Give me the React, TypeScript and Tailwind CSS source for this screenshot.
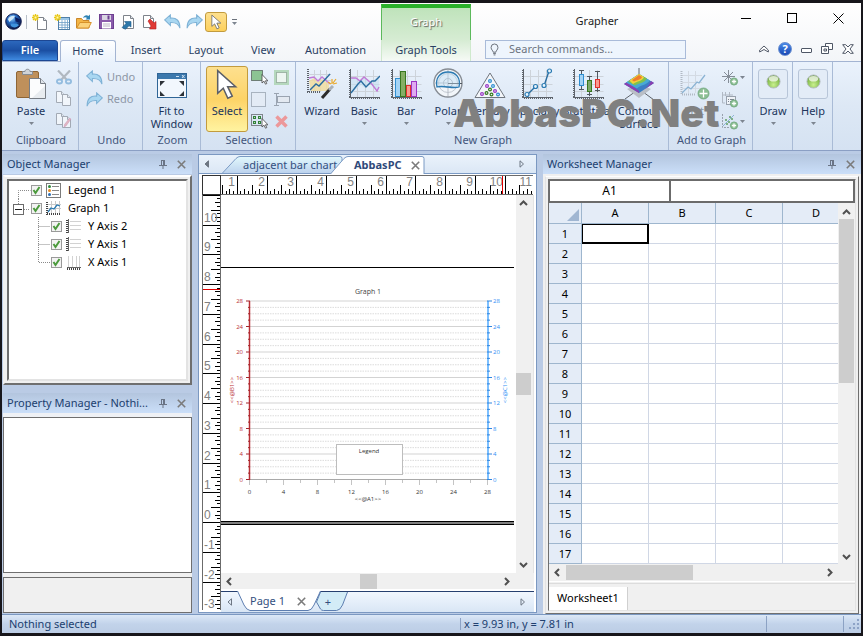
import { useState } from "react";
import type { ReactNode } from "react";

const TABS = [
  { label: "Insert", width: "w-[60px]" },
  { label: "Layout", width: "w-[60px]" },
  { label: "View", width: "w-[54px]" },
  { label: "Automation", width: "w-[91px]" },
];

const TREE = [
  { label: "Legend 1", kind: "legend", depth: 0 },
  { label: "Graph 1", kind: "graph", depth: 0 },
  { label: "Y Axis 2", kind: "y", depth: 1 },
  { label: "Y Axis 1", kind: "y", depth: 1 },
  { label: "X Axis 1", kind: "x", depth: 1 },
];

const COLUMNS = ["A", "B", "C", "D"];
const ROWS = Array.from({ length: 17 }, (_, i) => i + 1);

/* ---------- Small glyphs ---------- */

function Caret({ className = "" }: { className?: string }) {
  return (
    <svg width="5" height="3" viewBox="0 0 5 3" className={className}>
      <path d="M0 0h5L2.5 3z" fill="#7d8590" />
    </svg>
  );
}

function Chevron({ dir }: { dir: "up" | "down" | "left" | "right" }) {
  const d = {
    up: "M1 6l3.5-3.5L8 6",
    down: "M1 3l3.5 3.5L8 3",
    left: "M6 1L2.500 4.5 6 8",
    right: "M3 1l3.5 3.5L3 8",
  }[dir];
  return (
    <svg width="9" height="9" viewBox="0 0 9 9" fill="none" stroke="#505050" strokeWidth="2">
      <path d={d} />
    </svg>
  );
}

function Triangle({ dir, filled = false }: { dir: "left" | "right"; filled?: boolean }) {
  return (
    <svg width="6" height="8" viewBox="0 0 6 8" fill={filled ? "#6d7683" : "none"} stroke="#6d7683">
      <path d={dir === "left" ? "M4.5 .8v6.400L1 4z" : "M1 .8v6.400L4.5 4z"} />
    </svg>
  );
}

function Cross() {
  return (
    <svg width="9" height="9" viewBox="0 0 9 9" stroke="#7b7b7b" strokeWidth="1.6">
      <path d="M.8 .8l7.400 7.400M8.200 .8L.8 8.200" />
    </svg>
  );
}

function Pin() {
  return (
    <svg width="8" height="9" viewBox="0 0 8 9" fill="none" stroke="#6a7485">
      <path d="M2 .5h4M2.500 .5v5M5.500 .5v5M4.500 .5v5M0 5.500h8M4 6v3" />
    </svg>
  );
}

function Page({ x = 0, y = 0, w = 10, h = 13 }: { x?: number; y?: number; w?: number; h?: number }) {
  return (
    <g>
      <path
        d={`M${x + 0.5} ${y + 0.5}h${w - 4}l3 3v${h - 4}h-${w - 1}z`}
        fill="#fff"
        stroke="#7d828a"
      />
      <path d={`M${x + w - 3.5} ${y + 0.5}v3h3`} fill="#e4e8ee" stroke="#7d828a" />
    </g>
  );
}

function Star() {
  return (
    <g stroke="#e9c713" strokeWidth="1.4">
      <path d="M3.500 0v7M0 3.500h7M1 1l5 5M6 1L1 6" />
      <rect x="2.500" y="2.500" width="2" height="2" fill="#fff9b0" stroke="none" />
    </g>
  );
}

function Arrow({ redo = false }: { redo?: boolean }) {
  return (
    <svg width="17" height="15" viewBox="0 0 16 14" className={redo ? "-scale-x-100" : ""}>
      <path
        d="M.7 5.500L6 .8v3c5.500-.6 9 2.200 9 9.500-1.200-4-3.600-5.600-9-5.300v2.800z"
        fill="#a9d7f1"
        stroke="#7fb2d6"
      />
    </svg>
  );
}

function Pointer({ w = 13, h = 18 }: { w?: number; h?: number }) {
  return (
    <svg width={w} height={h} viewBox="0 0 13 18">
      <path
        d="M1 .8v13.400l3.300-3 2.700 5.900 2.600-1.200-2.700-5.600h4.700z"
        fill="#fff"
        stroke="#5b5f68"
        strokeWidth=".9"
      />
    </svg>
  );
}

/* ---------- Quick access icons ---------- */

function Globe() {
  return (
    <svg width="17" height="17" viewBox="0 0 17 17">
      <defs>
        <radialGradient id="globe" cx=".4" cy=".3" r=".7">
          <stop offset="0" stopColor="#8cc8f2" />
          <stop offset=".45" stopColor="#2468c0" />
          <stop offset="1" stopColor="#06103c" />
        </radialGradient>
      </defs>
      <circle cx="8.500" cy="8.500" r="7.800" fill="url(#globe)" stroke="#151d4e" />
      <path d="M3 6.500c1-3 4-4.200 7-3.600l-1.500 2.600L6 7.500 4.500 9z" fill="#cfe8fa" />
      <path d="M5.500 10.500h6l2.500 1.500c-2 3-6 3-8 1z" fill="#3f92dd" />
      <path d="M10 4l5 2.500-.5 3-4-1z" fill="#0c1d5e" />
    </svg>
  );
}

function NewDoc() {
  return (
    <svg width="16" height="16" viewBox="0 0 16 16">
      <Page x={5} y={3} />
      <Star />
    </svg>
  );
}

function NewSheet() {
  return (
    <svg width="16" height="16" viewBox="0 0 16 16">
      <rect x="4.500" y="3.500" width="11" height="12" fill="#fff" stroke="#4f7fa9" />
      <path d="M5 4h10v2H5z" fill="#9cc7e8" />
      <path d="M5 8.500h10M5 11h10M5 13.500h10M8 6v9M11 6v9M13.500 6v9" stroke="#6fa0c8" strokeWidth=".8" />
      <Star />
    </svg>
  );
}

function OpenFolder() {
  return (
    <svg width="16" height="15" viewBox="0 0 16 15">
      <path d="M.5 14V4.500h5l1.500 2h6V14z" fill="#f4b545" stroke="#c9862a" />
      <path d="M.8 14l3-5.500h11.500L12.500 14z" fill="#fbd27a" stroke="#d8922b" />
      <path d="M7 4c1-3 4-3.500 5.500-2l1.500-1.500v5H9.500L11 4c-1-1-2.500-1-4 0z" fill="#2e83b5" />
    </svg>
  );
}

function Save() {
  return (
    <svg width="15" height="15" viewBox="0 0 15 15">
      <rect x=".5" y=".5" width="14" height="14" fill="#8a5bab" stroke="#6d3f90" />
      <rect x="3" y="1" width="9" height="5" fill="#d9d4e2" />
      <rect x="8.500" y="1.500" width="2" height="4" fill="#6d3f90" />
      <rect x="3" y="8" width="9" height="6.500" fill="#fff" />
      <path d="M4 10h7M4 12h7" stroke="#b9b2c4" />
    </svg>
  );
}

function Transfer({ out = false }: { out?: boolean }) {
  return (
    <svg width="15" height="16" viewBox="0 0 15 16">
      {out ? <Page x={0} y={1} w={11} h={13} /> : <Page x={2} y={1} w={11} h={14} />}
      {out ? (
        <path d="M5 7l2-2 4 4 2-1.500V15H6.500L8 12z" fill="#e03a35" stroke="#b51f1f" strokeWidth=".6" />
      ) : (
        <path d="M1 13.500l4-4L3.500 7.500H10V13l-2-1.200-3.500 3.500z" fill="#2e78aa" stroke="#1f5d8a" strokeWidth=".6" />
      )}
    </svg>
  );
}

/* ---------- Ribbon icons ---------- */

function PasteIcon() {
  return (
    <svg width="32" height="32" viewBox="0 0 32 32">
      <rect x="1.500" y="3.500" width="22" height="26" rx="1.500" fill="#bf905b" stroke="#8e6535" />
      <path d="M7.500 6.500V3.500h2.500c0-3 5-3 5 0h2.500v3z" fill="#cfd3d8" stroke="#868c94" />
      <path d="M14.500 10.500h11l5 5v15h-16z" fill="#fbfcfd" stroke="#777d85" />
      <path d="M17 30l13-12v12z" fill="#e8ecf0" />
      <path d="M25.500 10.500v5h5" fill="#dfe4ea" stroke="#777d85" />
    </svg>
  );
}

function CutIcon() {
  return (
    <svg width="16" height="15" viewBox="0 0 16 15" fill="none">
      <path d="M2 .5l9 9.500M14 .5L5 10" stroke="#b0b8c0" strokeWidth="2.200" />
      <ellipse cx="3.500" cy="11.500" rx="2.600" ry="2" stroke="#93bcdf" strokeWidth="1.800" />
      <ellipse cx="12.500" cy="11.500" rx="2.600" ry="2" stroke="#93bcdf" strokeWidth="1.800" />
    </svg>
  );
}

function CopyIcon({ brush = false }: { brush?: boolean }) {
  return (
    <svg width="16" height="16" viewBox="0 0 16 16" opacity=".6">
      <Page x={0} y={0} w={9} h={12} />
      <Page x={6} y={3} w={9} h={12} />
      {brush && <path d="M15 6l-5 7-2 1 .5-2.500 5-6.500z" fill="#e79aa0" stroke="#b48" strokeWidth=".4" />}
    </svg>
  );
}

function FitIcon() {
  return (
    <svg width="32" height="32" viewBox="0 0 32 32">
      <rect x="1.500" y="5.500" width="29" height="24" fill="#f2f7fd" stroke="#2f6596" />
      <path d="M2 6h28v5H2z" fill="#3b78ad" />
      <path d="M20 8.500h3M26 7l2.500 3M28.500 7L26 10" stroke="#cfe1f1" />
      <path d="M4 13h5l-5 5zM28 13h-5l5 5zM4 28h5l-5-5zM28 28h-5l5-5z" fill="#2d3238" />
    </svg>
  );
}

function SelectSmall({ kind }: { kind: "fill" | "all" | "group" | "inner" | "text" | "delete" }) {
  const cursor = (
    <path d="M11 4.500v8.500l2-1.800 1.500 3 1.300-.7-1.400-2.700H17z" fill="#fff" stroke="#444" strokeWidth=".8" />
  );
  return (
    <svg width="17" height="15" viewBox="0 0 17 15" fill="none">
      {kind === "fill" && (
        <>
          <rect x=".5" y=".5" width="11" height="10" fill="#8cc493" stroke="#222" strokeDasharray="1 1" />
          {cursor}
        </>
      )}
      {kind === "all" && (
        <rect x=".5" y=".5" width="14" height="14" fill="#e3ebf5" stroke="#6f7a88" strokeDasharray="1 1" />
      )}
      {kind === "group" && (
        <>
          <rect x=".5" y=".5" width="11" height="11" stroke="#222" strokeDasharray="1 1" />
          <g stroke="#33803a" fill="#b9e0b4">
            <rect x="2.500" y="2.500" width="2" height="2" />
            <rect x="7.500" y="2.500" width="2" height="2" />
            <rect x="2.500" y="7.500" width="2" height="2" />
            <rect x="7.500" y="7.500" width="2" height="2" />
          </g>
          {cursor}
        </>
      )}
      {kind === "inner" && (
        <>
          <rect x="1" width="15" height="15" fill="#b5d8bd" />
          <rect x="3.500" y="2.500" width="10" height="10" fill="#edf6f1" stroke="#6f8576" strokeDasharray="1 1" />
        </>
      )}
      {kind === "text" && (
        <g stroke="#9aa4b1">
          <rect x="4.500" y="4.500" width="12" height="6" fill="#e3e9f1" />
          <path d="M1 1.500h5M3.500 1.500v12M1 13.500h5" />
        </g>
      )}
      {kind === "delete" && <path d="M3.500 2.500l10 10M13.500 2.500l-10 10" stroke="#ec989a" strokeWidth="3.500" />}
    </svg>
  );
}

function Axes() {
  return (
    <g fill="none">
      <path d="M2.500 8.500h29M2.500 16.500h29M2.500 23.500h29M9.500 2v28M17.500 2v28M25.500 2v28" stroke="#cdd3da" />
      <path d="M2.500 1v29M1 29.500h31" stroke="#5d636b" />
      <path d="M1.500 2v28" stroke="#5d636b" strokeDasharray="1 1" />
      <path d="M3 30.500h29" stroke="#5d636b" strokeDasharray="1 1" />
    </g>
  );
}

function Ball({ x, y, c, r = 1.4 }: { x: number; y: number; c: string; r?: number }) {
  return <circle cx={x} cy={y} r={r} fill="#eaf5fd" stroke={c} strokeWidth="1.2" />;
}

function GraphIcon({ kind }: { kind: string }) {
  return (
    <svg width="32" height="32" viewBox="0 0 32 32" fill="none">
      {["basic", "bar", "specialty", "stat"].includes(kind) && <Axes />}
      {kind === "wizard" && (
        <>
          <path d="M3 6.500h22M3 12.500h22M8.500 2v22M14.500 2v22M20.500 2v22" stroke="#cdd3da" />
          <path d="M3 13l5-3 4 4 4-3 7 5v7H5z" fill="#f1dc9a" opacity=".8" />
          <path d="M3 10l5-1 4 4 4-4 8 7" stroke="#c07ad6" strokeWidth="1.3" />
          <path d="M4 22L10 16l3 2L24 6" stroke="#2a6da0" strokeWidth="1.4" />
          <path d="M2 1v24M1 24h14" stroke="#5d636b" strokeWidth="2" strokeDasharray="1 1" />
          <path d="M16 30l8-9" stroke="#2b2b2b" strokeWidth="3" />
          <path d="M23 22l4-4" stroke="#aab0b8" strokeWidth="3" />
          <path d="M26 11v5M22 14l3 2M31 15l-4 1M30 11l-3 4" stroke="#eaa829" strokeWidth="1.2" />
        </>
      )}
      {kind === "basic" && (
        <>
          <path d="M3 10h5l4 3 4-4 6 5 9-6v13l-2 1-7-8-5 6-4-3-10 8z" fill="#c6dff0" opacity=".6" />
          <path d="M3 10h5l4 3 4-4 7 6 6 8 2-4" stroke="#c07ad6" strokeWidth="1.4" />
          <path d="M3 25l7-9 3-3 5 6 6-6h3l5-5" stroke="#2a6da0" strokeWidth="1.4" />
        </>
      )}
      {kind === "bar" && (
        <>
          <rect x="5.500" y="10.500" width="5" height="18" fill="#a4d3f5" stroke="#2f8ed0" />
          <rect x="10.500" y="3.500" width="5" height="25" fill="#85ae64" stroke="#38781f" />
          <rect x="16.500" y="17.500" width="4" height="11" fill="#f99a90" stroke="#e2312c" />
          <rect x="21.500" y="13.500" width="5" height="15" fill="#dfaaf0" stroke="#9a35c4" />
        </>
      )}
      {kind === "polar" && (
        <>
          <circle cx="16" cy="15" r="14" fill="#f2f6fa" stroke="#868c94" strokeWidth="1.4" />
          <circle cx="16" cy="15" r="9.500" stroke="#c3c9d1" />
          <circle cx="16" cy="15" r="4.500" stroke="#a9b0b9" />
          <path d="M16 2v26M2 15h14" stroke="#b5bbc4" />
          <path d="M16 15.500h14" stroke="#52585f" />
          <path d="M5 19c-2-9 3-15 11-15 8 0 13 6 11 15-7 2-15-2-22 0z" fill="#b9dcf2" fillOpacity=".4" stroke="#2a7ab2" strokeWidth="1.3" />
        </>
      )}
      {kind === "ternary" && (
        <>
          <path d="M16 5L31 29.500H1z" fill="#f3f6fa" stroke="#70767e" />
          <Ball x={16} y={13} c="#2f8ed0" />
          <Ball x={13} y={18} c="#9a35c4" />
          <Ball x={19} y={18} c="#2f8ed0" />
          <Ball x={16} y={21.5} c="#38781f" />
          <Ball x={21} y={23} c="#9a35c4" />
          <Ball x={8} y={26} c="#9a35c4" />
          <Ball x={12.5} y={25} c="#38781f" />
          <Ball x={17.5} y={26.5} c="#38781f" />
          <Ball x={24} y={26.5} c="#2f8ed0" />
        </>
      )}
      {kind === "specialty" && (
        <g strokeWidth="1.400">
          <path d="M6 27l8-8M23 18l5-15" stroke="#2a6da0" />
          <Ball x={6} y={26.5} c="#2a7ab2" r={2} />
          <Ball x={14.5} y={18.5} c="#2a7ab2" r={2} />
          <Ball x={23} y={17.5} c="#2a7ab2" r={2} />
          <Ball x={28.5} y={3} c="#2a7ab2" r={2} />
        </g>
      )}
      {kind === "stat" && (
        <g>
          <path d="M7 2.500h5M9.500 2.500V22M7 21.500h5M15 8.500h5M17.500 8.500V28M15 26.500h5M23 3.500h5M25.500 4v20M23 22.500h5" stroke="#52585f" />
          <rect x="7.500" y="6.500" width="4" height="11" fill="#a4d3f5" stroke="#2f8ed0" />
          <rect x="15.500" y="12.500" width="4" height="11" fill="#7ea86a" stroke="#38781f" />
          <rect x="23.500" y="11.500" width="4" height="8" fill="#f99a90" stroke="#e2312c" />
        </g>
      )}
      {kind === "contour" && (
        <>
          <path d="M16 21L2 31M16 21l15 11M16 0v8" stroke="#5d636b" />
          <path d="M4 21l12-5 12 5-12 9z" fill="#b9bec6" />
          <path d="M1 16L16 6l15 9-15 10z" fill="#3c7dc4" />
          <path d="M1 16l3-2 12 9v2z" fill="#8a3fb0" />
          <path d="M31 15l-3-2-2 4-4 4z" fill="#8a3fb0" />
          <path d="M3 14.500L16 6l11 6.500c-4 5-9 4-13 8z" fill="#48a9d4" />
          <path d="M5 13.500L16 6l8 4.500c-3 5-7 4-12 7z" fill="#7fc24e" />
          <path d="M6.500 12.500L16 6l5 3c-1 4-7 4-11 7z" fill="#f5cf3a" />
          <path d="M9 12L16 7l3 2c-1 3-5 3-8 4.500z" fill="#ee7d2c" />
        </>
      )}
    </svg>
  );
}

function Plus({ x, y, r = 4 }: { x: number; y: number; r?: number }) {
  return (
    <g>
      <circle cx={x} cy={y} r={r} fill="#8cbf94" stroke="#6ba377" strokeWidth=".8" />
      <path d={`M${x - r + 1.5} ${y}h${2 * r - 3}M${x} ${y - r + 1.5}v${2 * r - 3}`} stroke="#fff" strokeWidth="1.3" />
    </g>
  );
}

function AddPlotIcon() {
  return (
    <svg width="32" height="32" viewBox="0 0 32 32" fill="none">
      <path d="M4 7.500h20M4 14.500h20M4 20.500h20M10.500 3v22M17.500 3v22" stroke="#d3dae3" />
      <path d="M3.500 3v23.500H18" stroke="#b1b9c4" strokeWidth="2" strokeDasharray="1 1" />
      <path d="M4 25l6-6 3 2 6-7 2 1 6-8" stroke="#8bb3d3" strokeWidth="1.3" />
      <Plus x={25.5} y={25.5} r={5.5} />
    </svg>
  );
}

function AddSmall({ kind }: { kind: "axis" | "legend" | "fit" }) {
  return (
    <svg width="18" height="17" viewBox="0 0 18 17" fill="none">
      {kind === "axis" && <path d="M1 7.500h13M7.500 1v13M3 3l9 9M12 3l-9 9" stroke="#858d98" />}
      {kind === "legend" && (
        <>
          <path d="M1.500 1v11H4M1 4h11M4.500 1v4M8.500 1v4" stroke="#b1b9c4" />
          <rect x="5.500" y="5.500" width="9" height="8" fill="#eef2f7" stroke="#98a1ad" />
          <path d="M7 8.500h1M9 8.500h4M7 10.500h1M9 10.500h4" stroke="#7d8692" />
        </>
      )}
      {kind === "fit" && (
        <>
          <path d="M1.500 1v13.500H8" stroke="#98a1ad" strokeDasharray="2 1" />
          <path d="M2 13L13 2" stroke="#8bb3d3" />
          <path d="M4 7h2M7 9h2M10 6h2M5 11h2M8 4h2" stroke="#7fb086" strokeWidth="2" />
        </>
      )}
      <Plus x={13} y={12.5} r={3.6} />
    </svg>
  );
}

function GreenBall() {
  return (
    <span className="flex h-[30px] w-[30px] justify-center rounded-[3px] border border-[#b7c5d8] bg-[#e3ecf7] pt-1">
      <svg width="15" height="15" viewBox="0 0 16 16">
        <defs>
          <radialGradient id="ball" cx=".5" cy=".75" r=".75">
            <stop offset="0" stopColor="#c9f08f" />
            <stop offset=".6" stopColor="#8cc255" />
            <stop offset="1" stopColor="#6f9c4a" />
          </radialGradient>
        </defs>
        <circle cx="8" cy="8" r="7" fill="url(#ball)" stroke="#b3bcc0" />
        <ellipse cx="8" cy="5" rx="5" ry="3" fill="#fff" opacity=".7" />
      </svg>
    </span>
  );
}

/* ---------- Ribbon building blocks ---------- */

function Group({ label, width, children }: { label?: string; width: string; children: ReactNode }) {
  return (
    <section className={`flex shrink-0 flex-col border-r border-[#a9bbd6] pt-1 ${width}`}>
      <div className="flex flex-1">{children}</div>
      <div className="h-[18px] pl-[2px] text-center text-[11px] leading-4 text-[#42557b]">{label}</div>
    </section>
  );
}

function BigButton({
  icon,
  label,
  width,
  caret = false,
  active = false,
  dim = false,
}: {
  icon: ReactNode;
  label: string;
  width: string;
  caret?: boolean;
  active?: boolean;
  dim?: boolean;
}) {
  return (
    <button
      className={`flex h-[66px] shrink-0 flex-col items-center text-[11px] leading-[13px] ${width} ${
        active
          ? "rounded-[3px] border border-[#c29b3e] bg-linear-to-b from-[#fde08e] via-[#fdd366] to-[#fff3a0] pt-px"
          : "pt-0.5"
      } ${dim ? "text-[#8d97a6]" : "text-[#20355c]"}`}
    >
      <span className="flex h-8 items-center justify-center">{icon}</span>
      <span className="mt-1 text-center whitespace-pre">{label}</span>
      {caret && <Caret className="mt-[5px]" />}
    </button>
  );
}

function Ribbon() {
  return (
    <div className="relative flex h-[89px] shrink-0 border-b border-[#8b9fc4] bg-linear-to-b from-[#eaf2fc] via-[#dde8f5] to-[#d5e2f2]">
      <Group label="Clipboard" width="w-[77px]">
        <BigButton icon={<PasteIcon />} label="Paste" width="ml-2 w-[42px]" caret />
        <div className="flex flex-col gap-[6px] pt-[4px] pl-1">
          <button aria-label="Cut"><CutIcon /></button>
          <button aria-label="Copy"><CopyIcon /></button>
          <button aria-label="Copy format"><CopyIcon brush /></button>
        </div>
      </Group>
      <Group label="Undo" width="w-16">
        <div className="flex flex-col pl-[7px] text-[11px] text-[#8d97a6]">
          <button className="flex h-[22px] items-center gap-1"><Arrow />Undo</button>
          <button className="flex h-[22px] items-center gap-1"><Arrow redo />Redo</button>
        </div>
      </Group>
      <Group label="Zoom" width="w-[58px]">
        <BigButton icon={<FitIcon />} label={"Fit to\nWindow"} width="w-full" />
      </Group>
      <Group label="Selection" width="w-[95px]">
        <BigButton icon={<Pointer w={22} h={31} />} label="Select" width="ml-[5px] w-[42px]" active />
        <div className="grid flex-1 grid-cols-2 content-start gap-y-[7px] pt-[4px] pl-[3px]">
          <button aria-label="Block select"><SelectSmall kind="fill" /></button>
          <button aria-label="Inverse select"><SelectSmall kind="inner" /></button>
          <button aria-label="Select all"><SelectSmall kind="all" /></button>
          <button aria-label="Rename"><SelectSmall kind="text" /></button>
          <button aria-label="Select group"><SelectSmall kind="group" /></button>
          <button aria-label="Delete"><SelectSmall kind="delete" /></button>
        </div>
      </Group>
      <Group label="New Graph" width="w-[373px]">
        <div className="flex pl-[5px]">
          <BigButton icon={<GraphIcon kind="wizard" />} label="Wizard" width="w-[42px]" />
          <BigButton icon={<GraphIcon kind="basic" />} label="Basic" width="w-[42px]" caret />
          <BigButton icon={<GraphIcon kind="bar" />} label="Bar" width="w-[42px]" caret />
          <BigButton icon={<GraphIcon kind="polar" />} label="Polar" width="w-[42px]" caret />
          <BigButton icon={<GraphIcon kind="ternary" />} label="Ternary" width="w-[42px]" caret />
          <BigButton icon={<GraphIcon kind="specialty" />} label="Specialty" width="w-[51px]" caret />
          <BigButton icon={<GraphIcon kind="stat" />} label="Statistical" width="w-[52px]" caret />
          <BigButton icon={<GraphIcon kind="contour" />} label={"Contour\nSurface"} width="w-[50px]" />
        </div>
      </Group>
      <Group label="Add to Graph" width="w-[84px]">
        <BigButton icon={<AddPlotIcon />} label="Plot" width="ml-1 w-[42px]" dim />
        <div className="flex flex-col gap-[5px] pt-[3px] pl-[6px]">
          <button aria-label="Add axis" className="flex items-center gap-px"><AddSmall kind="axis" /><Caret /></button>
          <button aria-label="Add legend" className="flex items-center"><AddSmall kind="legend" /></button>
          <button aria-label="Add fit" className="flex items-center gap-px"><AddSmall kind="fit" /><Caret /></button>
        </div>
      </Group>
      <Group width="w-10 pl-px">
        <BigButton icon={<GreenBall />} label="Draw" width="w-full" caret />
      </Group>
      <Group width="w-10 pl-px">
        <BigButton icon={<GreenBall />} label="Help" width="w-full" caret />
      </Group>
      <span className="pointer-events-none absolute top-[29px] left-[451px] font-['Inter',sans-serif] text-[39px] leading-[44px] font-black whitespace-nowrap text-[#808080]">
        AbbasPC.Net
      </span>
    </div>
  );
}

/* ---------- Title bar and tabs ---------- */

function TitleBar() {
  const quick = [
    { name: "New plot", icon: <NewDoc /> },
    { name: "New worksheet", icon: <NewSheet /> },
    { name: "Open", icon: <OpenFolder /> },
    { name: "Save", icon: <Save /> },
    { name: "Import", icon: <Transfer /> },
    { name: "Export", icon: <Transfer out /> },
    { name: "Undo", icon: <Arrow /> },
    { name: "Redo", icon: <Arrow redo /> },
  ];
  return (
    <div className="flex h-[37px] shrink-0">
      <div className="flex w-[379px] shrink-0 items-center">
        <span className="flex w-[22px] justify-center"><Globe /></span>
        <span className="mx-[2px] h-[14px] w-px bg-[#b8bfc8]" />
        {quick.map((q) => (
          <button key={q.name} aria-label={q.name} className="flex w-[22px] justify-center">
            {q.icon}
          </button>
        ))}
        <button
          aria-label="Select"
          className="flex h-5 w-[22px] items-center justify-center rounded-[3px] border border-[#c29b3e] bg-linear-to-b from-[#fde08e] to-[#fdd05a]"
        >
          <Pointer w={11} h={16} />
        </button>
        <button aria-label="Customize" className="ml-[5px] flex flex-col items-center gap-[2px]">
          <span className="h-px w-[5px] bg-[#6b727c]" />
          <Caret />
        </button>
      </div>
      <div className="mt-px flex w-[90px] shrink-0 items-center justify-center border-x border-t-4 border-x-[#5cb95c] border-t-[#2bb12b] bg-linear-to-b from-[#bfe3bb] to-[#d6ecd3] pb-1 text-[11px] text-white [text-shadow:1px_1px_1px_#555]">
        Graph
      </div>
      <h1 className="flex-1 self-center text-center text-[11px] text-[#222]">Grapher</h1>
      <div className="flex h-[30px]">
        <button aria-label="Minimize" className="flex w-[46px] items-center justify-center">
          <span className="h-px w-[10px] bg-black" />
        </button>
        <button aria-label="Maximize" className="flex w-[46px] items-center justify-center">
          <span className="h-[10px] w-[10px] border border-black" />
        </button>
        <button aria-label="Close" className="flex w-[46px] items-center justify-center">
          <svg width="11" height="11" viewBox="0 0 11 11" stroke="#000">
            <path d="M.5 .5l10 10M10.500 .5l-10 10" />
          </svg>
        </button>
      </div>
    </div>
  );
}

function TabBar() {
  const [query, setQuery] = useState("");
  return (
    <div className="flex h-[22px] shrink-0 border-b border-[#a3b4d2] text-[11px] text-[#2b3f63]">
      <button className="w-14 rounded-t-[3px] border border-[#1d4793] bg-linear-to-b from-[#2c68bd] via-[#1b4fa3] to-[#3f8ae0] font-semibold text-white">
        File
      </button>
      <button className="-mb-px ml-[2px] h-[22px] w-14 rounded-t-[3px] border border-b-0 border-[#a3b4d2] bg-linear-to-b from-white to-[#eaf2fc]">
        Home
      </button>
      {TABS.map((t) => (
        <button key={t.label} className={t.width}>{t.label}</button>
      ))}
      <button className="w-[90px] shrink-0 border-x border-[#cfe9cd] bg-linear-to-b from-[#d6ecd3] to-[#f6faf6]">
        Graph Tools
      </button>
      <label className="ml-[14px] flex h-[19px] w-[201px] items-center border border-[#a9bbd9] bg-[#eef5fd] pl-1">
        <svg width="10" height="13" viewBox="0 0 10 13" fill="none" stroke="#5f6670">
          <path d="M3.500 9.500C3.500 7.500 1.200 7 1.200 4.200a3.800 3.800 0 017.600 0c0 2.800-2.300 3.300-2.300 5.300zM3.500 11h3M4 12.500h2" />
        </svg>
        <span className="sr-only">Search commands</span>
        <input
          value={query}
          onChange={(e) => setQuery(e.target.value)}
          placeholder="Search commands..."
          className="ml-[10px] w-full bg-transparent outline-none placeholder:text-[#6c7480]"
        />
      </label>
      <div className="mr-[7px] ml-auto flex items-center gap-[9px] pb-1">
        <button aria-label="Collapse ribbon">
          <svg width="10" height="8" viewBox="0 0 10 8" fill="#fff" stroke="#4f5766">
            <path d="M.7 5L5 1l4.300 4v2L5 4.500.7 7z" />
          </svg>
        </button>
        <button aria-label="Help" className="flex h-[14px] w-[14px] items-center justify-center rounded-full border border-[#6a8fd0] bg-linear-to-b from-[#4a8ae8] to-[#1846b4] text-[11px] leading-none font-bold text-white">
          ?
        </button>
        <button aria-label="Minimize document" className="mt-1 h-[5px] w-[11px] rounded-[1px] border border-[#4f5766] bg-white" />
        <button aria-label="Restore document">
          <svg width="12" height="11" viewBox="0 0 12 11" fill="#fff" stroke="#4f5766">
            <path d="M4.500 .5h7v6h-7z" />
            <path d="M.5 3.500h7v7h-7zM3 6h2.500v2H3z" />
          </svg>
        </button>
        <button aria-label="Close document">
          <svg width="12" height="10" viewBox="0 0 12 10" fill="#fff" stroke="#4f5766">
            <path d="M.7 .7h3L6 3l2.300-2.300h3L8 5l3.300 4.300h-3L6 7 3.700 9.300h-3L4 5z" />
          </svg>
        </button>
      </div>
    </div>
  );
}

/* ---------- Side panels ---------- */

function PanelHeader({ title }: { title: string }) {
  return (
    <header className="flex h-5 shrink-0 items-center bg-linear-to-b from-[#b3c5de] to-[#cbdff9] pr-[6px] pl-1 text-[11px] text-[#20406f]">
      <h2 className="flex-1 whitespace-nowrap">{title}</h2>
      <button aria-label="Pin" className="mr-[10px]"><Pin /></button>
      <button aria-label="Close"><Cross /></button>
    </header>
  );
}

function TreeIcon({ kind }: { kind: string }) {
  return (
    <svg width="15" height="15" viewBox="0 0 15 15" fill="none">
      {kind === "legend" && (
        <>
          <rect x=".5" y=".5" width="14" height="14" fill="#fff" stroke="#7b7b7b" />
          <path d="M6 3.500h7M6 7.500h7M6 11.500h7" stroke="#8a8a8a" />
          <circle cx="3.500" cy="3.500" r="1.500" fill="#2f8a3c" />
          <circle cx="3.500" cy="7.500" r="1.500" fill="#e88a1f" />
          <circle cx="3.500" cy="11.500" r="1.500" fill="#2a6db5" />
        </>
      )}
      {kind === "graph" && (
        <>
          <path d="M2 3.500h13M2 7.500h13M5.500 0v13M9.500 0v13M13.500 0v13" stroke="#c9c9c9" />
          <path d="M1 1v13M1 13h14" stroke="#444" strokeWidth="2" strokeDasharray="1 1" />
          <path d="M2 11l3-4 3 1 3-4 3 1" stroke="#2a7ab2" strokeWidth="1.3" />
        </>
      )}
      {kind === "y" && (
        <>
          <path d="M4 2.500h11M4 6.500h11M4 10.500h11" stroke="#d2d2d2" />
          <path d="M2.500 0v14" stroke="#666" />
          <path d="M1 1v13" stroke="#444" strokeWidth="2" strokeDasharray="1 1" />
        </>
      )}
      {kind === "x" && (
        <>
          <path d="M2.500 1v11M6.500 1v11M10.500 1v11M13.500 1v11" stroke="#d2d2d2" />
          <path d="M1 12.500h14" stroke="#666" />
          <path d="M1 14h14" stroke="#444" strokeWidth="2" strokeDasharray="1 1" />
        </>
      )}
    </svg>
  );
}

function Branch({ index, depth }: { index: number; depth: number }) {
  const last = index === TREE.length - 1;
  const width = depth ? 41 : 21;
  return (
    <svg width={width} height="18" viewBox={`0 0 ${width} 18`} fill="none" stroke="#8a8a8a" strokeDasharray="1 1">
      {depth === 1 && <path d={last ? "M28.500 0v9.500h12" : "M28.500 0v18M28.500 9.500h12"} />}
      {index === 0 && <path d="M8.500 18V9.500h12" />}
      {index === 1 && (
        <>
          <path d="M8.500 0v5M14 10.500h6" />
          <rect x="3.500" y="5.500" width="10" height="10" fill="#fff" stroke="#6b6b6b" strokeDasharray="none" />
          <path d="M5 10.500h7" stroke="#222" strokeDasharray="none" />
        </>
      )}
    </svg>
  );
}

function ObjectManager() {
  return (
    <section className="flex h-[231px] shrink-0 flex-col">
      <PanelHeader title="Object Manager" />
      <div className="mt-px flex flex-1 flex-col border-2 border-t-white border-r-[#6f6f6f] border-b-[#6f6f6f] border-l-[#f0f0f0] bg-[#f0f0f0] p-[2px]">
        <ul className="flex-1 border-2 border-t-[#6f6f6f] border-r-[#e3e3e3] border-b-[#e3e3e3] border-l-[#6f6f6f] bg-white pl-px text-[11px] text-black">
          {TREE.map((n, i) => (
            <li key={n.label} className="flex h-[18px] items-center">
              <Branch index={i} depth={n.depth} />
              <label className="flex items-center">
                <span className="relative mr-1 flex">
                  <input type="checkbox" defaultChecked className="h-[11px] w-[11px] appearance-none border border-[#9a9a9a] bg-[#f3f3f3]" />
                  <svg width="11" height="11" viewBox="0 0 11 11" fill="none" className="pointer-events-none absolute inset-0">
                    <path d="M2.500 5l2 3 4-6" stroke="#4b9a3c" strokeWidth="2" />
                  </svg>
                </span>
                <TreeIcon kind={n.kind} />
                <span className="ml-[7px]">{n.label}</span>
              </label>
            </li>
          ))}
        </ul>
      </div>
    </section>
  );
}

function PropertyManager() {
  return (
    <section className="flex flex-1 flex-col">
      <PanelHeader title="Property Manager - Nothi..." />
      <div className="h-[4px] bg-[#eff1f5]" />
      <div className="flex-1 border border-[#6f6f6f] bg-white" />
      <div className="h-1 bg-[#f0f0f0]" />
      <div className="h-9 border border-[#6f6f6f] bg-[#f0f0f0]" />
    </section>
  );
}

/* ---------- Document ---------- */

function tickLength(eighth: number) {
  if (eighth % 8 === 0) return 19;
  if (eighth % 4 === 0) return 9;
  return eighth % 2 === 0 ? 5 : 3;
}

function RulerX() {
  const at = (n: number) => Math.round(-14 + n * 29.75);
  const eighths = Array.from({ length: 92 }, (_, i) => i + 4);
  return (
    <svg width="312" height="20" className="block bg-white">
      {eighths.map((e) => {
        const x = at(e / 8) + 0.5;
        return <path key={e} d={`M${x} 19v-${tickLength(e)}`} stroke="#000" />;
      })}
      {Array.from({ length: 11 }, (_, i) => i + 1).map((n) => (
        <text key={n} x={at(n) - 2} y="11" textAnchor="end" className="fill-[#808080] font-['Liberation_Sans',sans-serif] text-[12px]">
          {n}
        </text>
      ))}
      <path d="M0 .5h312M0 19.500h312" stroke="#6b6b6b" />
      <path d="M281.500 1v18" stroke="#e00000" />
    </svg>
  );
}

function RulerY() {
  const at = (n: number) => Math.round(327 - n * 29.75);
  const eighths = Array.from({ length: 113 }, (_, i) => i - 24);
  return (
    <svg width="19" height="415" className="block bg-white">
      {eighths.map((e) => {
        const y = at(e / 8) + 0.5;
        return <path key={e} d={`M18 ${y}h-${tickLength(e)}`} stroke="#000" />;
      })}
      {Array.from({ length: 14 }, (_, i) => i - 3).map((n) => (
        <text key={n} x="2" y={at(n) - 3} className="fill-[#808080] font-['Liberation_Sans',sans-serif] text-[12px]">
          {n}
        </text>
      ))}
      <path d="M.5 0v415M18.500 0v415" stroke="#6b6b6b" />
      <path d="M1 94.500h17" stroke="#e00000" />
    </svg>
  );
}

function PlotCanvas() {
  const y = (v: number) => 284.5 - (v * 178.5) / 28;
  const x = (v: number) => 28.5 + (v * 238) / 28;
  const units = Array.from({ length: 29 }, (_, i) => i);
  const majors = units.filter((u) => u % 4 === 0);
  return (
    <svg width="293" height="377" className="block font-['Open_Sans',sans-serif]">
      <path d="M0 72.500h293" stroke="#000" />
      <path d="M0 327.500h293" stroke="#808080" strokeWidth="3" />
      <path d="M0 326.500h293M0 329.500h293" stroke="#000" />
      <text x="147" y="99" textAnchor="middle" className="fill-[#444] text-[7px]">Graph 1</text>
      {units.slice(1).map((u) =>
        u % 4 === 0 ? (
          <path key={u} d={`M29 ${y(u)}h238`} stroke="#d3d3d3" />
        ) : (
          <path key={u} d={`M29 ${y(u)}h238`} stroke="#d3d3d3" strokeDasharray="1.500 1" strokeWidth=".8" />
        )
      )}
      <path d="M29 284.500h238" stroke="#a9a9a9" />
      {units.filter((u) => u % 2 === 0).map((u) => (
        <path key={u} d={`M${x(u)} 285v${u % 4 === 0 ? 5 : 3}`} stroke="#c4c4c4" />
      ))}
      <path d="M28.500 106v179" stroke="#b92f35" strokeWidth="1.500" />
      <path d="M267 106v179" stroke="#7ec0ff" strokeWidth="2" />
      {units.map((u) => (
        <g key={u}>
          <path d={`M${u % 4 === 0 ? 25 : 27} ${y(u)}H29`} stroke="#a5262c" />
          <path d={`M266 ${y(u)}h${u % 4 === 0 ? 5 : 3}`} stroke="#2f86e0" />
        </g>
      ))}
      {majors.map((u) => (
        <g key={u} className="text-[6px]">
          <text x="22" y={y(u) + 2} textAnchor="end" className="fill-[#b92f35]">{u}</text>
          <text x="272" y={y(u) + 2} className="fill-[#2f8ff5]">{u}</text>
          <text x={x(u)} y="299" textAnchor="middle" className="fill-[#333]">{u}</text>
        </g>
      ))}
      <text x="147" y="306" textAnchor="middle" className="fill-[#333] text-[6px]">{"<<@A1>>"}</text>
      <text transform="translate(13 195) rotate(-90)" textAnchor="middle" className="fill-[#b92f35] text-[6px]">{"<<@B1>>"}</text>
      <text transform="translate(286 195) rotate(-90)" textAnchor="middle" className="fill-[#2f8ff5] text-[6px]">{"<<@C1>>"}</text>
      <rect x="115.500" y="249.500" width="66" height="30" fill="#fff" stroke="#bdbdbd" />
      <text x="148" y="258" textAnchor="middle" className="fill-[#333] text-[6px]">Legend</text>
    </svg>
  );
}

function DocumentTabs() {
  return (
    <div className="flex h-[19px] shrink-0 items-end border-b border-[#7b9ac4] bg-linear-to-b from-[#eaf2fb] to-[#dbe7f5] text-[11px]">
      <button aria-label="Previous tab" className="w-[17px] self-center pl-[5px]"><Triangle dir="left" filled /></button>
      <button className="relative ml-[6px] h-[17px] w-[121px]">
        <svg width="121" height="17" viewBox="0 0 121 17" className="absolute inset-0">
          <defs>
            <linearGradient id="idle" x2="0" y2="1">
              <stop offset="0" stopColor="#e2f8fc" />
              <stop offset="1" stopColor="#bdd3ee" />
            </linearGradient>
          </defs>
          <path d="M.5 17L14 2.500Q16 .5 18 .5h100q2 0 2 2V17" fill="url(#idle)" stroke="#7b9ac4" />
        </svg>
        <span className="relative block h-[17px] pl-[21px] text-left leading-[17px] whitespace-nowrap text-[#33507f]">adjacent bar chart</span>
      </button>
      <button className="relative -mb-px -ml-[13px] h-[18px] w-[95px]">
        <svg width="95" height="18" viewBox="0 0 95 18" className="absolute inset-0">
          <path d="M.5 18L14 2.500Q16 .5 18 .5h74q2 0 2 2V18" fill="#fff" stroke="#7b9ac4" />
        </svg>
        <span className="relative flex h-[18px] items-center justify-between pr-[5px] pl-[24px] font-bold text-[#2f4a7a]">
          AbbasPC
          <Cross />
        </span>
      </button>
      <button aria-label="Next tab" className="mr-[11px] ml-auto self-center"><Triangle dir="right" /></button>
    </div>
  );
}

function PageTabs() {
  return (
    <div className="flex h-[21px] items-start border-t border-[#27406f] bg-linear-to-b from-[#f1f7fe] to-[#d9e6f5] text-[11px] text-[#33507f]">
      <button aria-label="Previous page" className="w-4 self-center pl-[6px]"><Triangle dir="left" /></button>
      <button className="relative -mt-px h-5 w-[84px]">
        <svg width="84" height="20" viewBox="0 0 84 20" className="absolute inset-0">
          <path d="M.5 0L7 14q2.500 5 6 5.500h58q3.500 0 6-5.500L83.500 0" fill="#fff" stroke="#5d7eb0" />
        </svg>
        <span className="relative flex h-5 items-center justify-between pr-[15px] pl-[13px]">
          Page 1
          <Cross />
        </span>
      </button>
      <button aria-label="Add page" className="relative -ml-[5px] h-5 w-8">
        <svg width="32" height="20" viewBox="0 0 32 20" className="absolute inset-0">
          <path d="M4.500 0L.5 10l4 7q1 1.500 3 1.500h13q3.500 0 6-5.500L31.500 0" fill="#d3ecf7" stroke="#5d7eb0" />
        </svg>
        <span className="relative pr-2 leading-5">+</span>
      </button>
      <button aria-label="Next page" className="mr-[8px] ml-auto self-center"><Triangle dir="right" /></button>
    </div>
  );
}

function DocumentView() {
  return (
    <section className="flex min-w-0 flex-1 flex-col border border-[#7b98c1] bg-white">
      <DocumentTabs />
      <div className="mt-px flex flex-1 pl-[3px]">
        <div className="flex w-[19px] shrink-0 flex-col">
          <div className="h-5 border border-[#333] bg-white" />
          <div className="min-h-0 flex-1 overflow-hidden"><RulerY /></div>
        </div>
        <div className="mr-[2px] flex min-w-0 flex-1 flex-col overflow-hidden">
          <RulerX />
          <div className="flex flex-1">
            <div className="min-w-0 flex-1 overflow-hidden"><PlotCanvas /></div>
            <div className="flex w-[18px] flex-col items-center justify-between border-r border-[#e3e3e3] bg-[#f0f0f0] py-1 pr-[2px]">
              <button aria-label="Scroll up"><Chevron dir="up" /></button>
              <span className="h-[22px] w-full bg-[#cdcdcd]" />
              <button aria-label="Scroll down"><Chevron dir="down" /></button>
            </div>
          </div>
          <div className="mb-[2px] flex h-4 items-center justify-between bg-[#f0f0f0] pr-[23px] pl-1">
            <button aria-label="Scroll left"><Chevron dir="left" /></button>
            <span className="h-[15px] w-[17px] bg-[#cdcdcd]" />
            <button aria-label="Scroll right"><Chevron dir="right" /></button>
          </div>
          <PageTabs />
        </div>
      </div>
    </section>
  );
}

/* ---------- Worksheet ---------- */

function Worksheet() {
  return (
    <section className="flex w-[318px] shrink-0 flex-col">
      <PanelHeader title="Worksheet Manager" />
      <div className="flex flex-1 flex-col bg-[#f0f0f0] p-[2px]">
        <div className="flex flex-1 flex-col border border-t-[#fdfdfd] border-r-[#6f6f6f] border-b-[#6f6f6f] border-l-[#e3e3e3] p-[2px]">
          <div className="flex flex-1 flex-col border border-t-[#6f6f6f] border-r-[#e3e3e3] border-b-[#e3e3e3] border-l-[#6f6f6f]">
            <div className="flex h-[23px] border-2 border-t border-l border-[#6b6b6b] bg-white text-black">
              <input aria-label="Cell address" defaultValue="A1" className="w-[121px] border-r-2 border-[#6b6b6b] text-center text-[12px] outline-none" />
              <input aria-label="Cell value" className="min-w-0 flex-1 outline-none" />
            </div>
            <div className="flex">
              <div className="min-w-0 flex-1 overflow-hidden bg-white">
                <table className="w-[301px] table-fixed border-separate border-spacing-0 text-[11px] leading-4 text-black">
                  <thead>
                    <tr className="h-[21px] bg-[#e4ecf7]">
                      <th className="w-[33px] border-r border-b border-[#9eb6ce] p-0">
                        <svg width="12" height="12" viewBox="0 0 12 12" className="mt-1 mr-[2px] ml-auto block">
                          <path d="M12 0v12H0z" fill="#a0b6d2" />
                        </svg>
                      </th>
                      {COLUMNS.map((c) => (
                        <th key={c} scope="col" className="border-r border-b border-[#9eb6ce] p-0 font-normal">{c}</th>
                      ))}
                    </tr>
                  </thead>
                  <tbody>
                    {ROWS.map((r) => (
                      <tr key={r} className="h-5">
                        <th scope="row" className="border-r border-b border-[#9eb6ce] bg-[#e4ecf7] p-0 font-normal">{r}</th>
                        {COLUMNS.map((c) => (
                          <td
                            key={c}
                            className={
                              r === 1 && c === "A"
                                ? "border border-r-2 border-b-2 border-black p-0"
                                : "border-r border-b border-[#d0d7e5] p-0"
                            }
                          />
                        ))}
                      </tr>
                    ))}
                  </tbody>
                </table>
              </div>
              <div className="flex w-[17px] flex-col items-center bg-[#f0f0f0] pt-[3px] pr-px pb-[3px]">
                <button aria-label="Scroll up" className="h-[13px]"><Chevron dir="up" /></button>
                <span className="h-[164px] w-[15px] bg-[#cdcdcd]" />
                <button aria-label="Scroll down" className="mt-auto"><Chevron dir="down" /></button>
              </div>
            </div>
            <div className="flex h-[18px] items-center border-b border-white bg-[#f0f0f0] pr-[21px] pl-1">
              <button aria-label="Scroll left"><Chevron dir="left" /></button>
              <span className="ml-1 h-[15px] w-[127px] bg-[#cdcdcd]" />
              <button aria-label="Scroll right" className="ml-auto"><Chevron dir="right" /></button>
            </div>
            <div className="mt-px flex-1 border-t border-[#dcdcdc]">
              <button className="h-[23px] border-r border-[#d0d0d0] bg-white px-2 text-[11px] text-black">Worksheet1</button>
            </div>
          </div>
        </div>
      </div>
    </section>
  );
}

function StatusBar() {
  return (
    <footer className="flex h-[19px] shrink-0 items-center border-t border-[#7b98c1] bg-linear-to-b from-[#dce8f7] via-[#c2d3ea] to-[#bccde5] text-[11px] text-[#20406f]">
      <span className="w-[458px] shrink-0 pl-[7px]">Nothing selected</span>
      <span className="h-3 w-px bg-[#8ca2c4]" />
      <span className="flex-1 pl-[3px]">x = 9.93 in, y = 7.81 in</span>
      <span className="h-4 w-px bg-[#8ca2c4]" />
      <span className="w-[76px]" />
      <span className="h-4 w-px bg-[#8ca2c4]" />
      <svg width="12" height="12" viewBox="0 0 12 12" fill="#8da3c6" className="mr-px ml-[4px]">
        <path d="M9 1h2v2H9zM5 5h2v2H5zM9 5h2v2H9zM1 9h2v2H1zM5 9h2v2H5zM9 9h2v2H9z" />
      </svg>
    </footer>
  );
}

export default function App() {
  return (
    <div className="flex h-screen min-h-[600px] flex-col bg-[#17161b] pt-[3px] pr-[2px] pb-[3px] pl-[2px] font-['Noto_Sans',sans-serif] select-none">
      <div className="flex shrink-0 flex-col bg-linear-to-b from-white to-[#f3f5f8]">
        <TitleBar />
        <TabBar />
      </div>
      <Ribbon />
      <main className="flex min-h-0 flex-1 gap-[6px] bg-[#bacbe5] pt-[3px] pb-px pl-px">
        <div className="flex w-[189px] shrink-0 flex-col gap-2">
          <ObjectManager />
          <PropertyManager />
        </div>
        <DocumentView />
        <Worksheet />
      </main>
      <StatusBar />
    </div>
  );
}
